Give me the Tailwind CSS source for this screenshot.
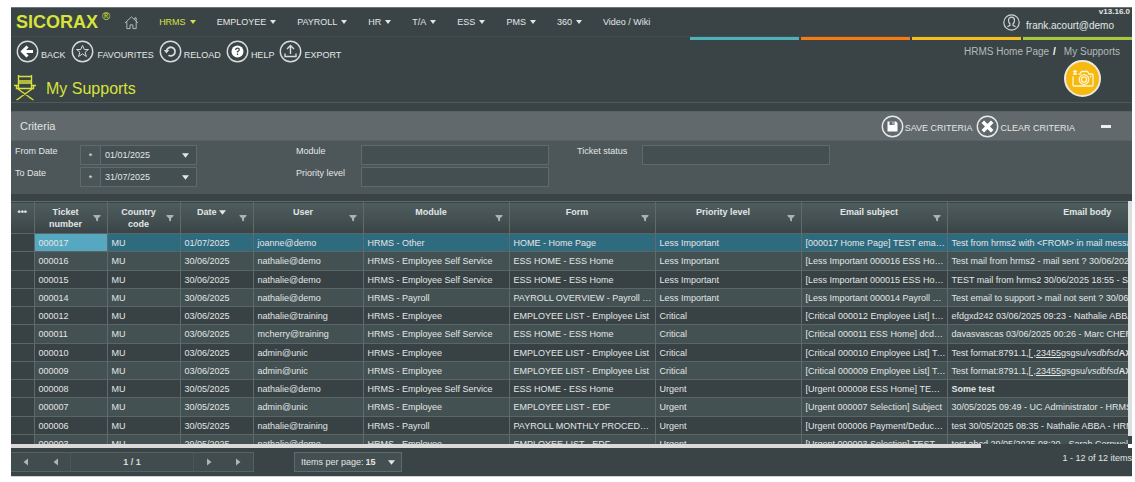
<!DOCTYPE html>
<html lang="en">
<head>
  <meta charset="utf-8">
  <title>SICORAX - My Supports</title>
  <script src="https://cdn.jsdelivr.net/npm/@tailwindcss/browser@4"></script>
</head>
<body class="bg-white pt-[7px] pl-[11px] pr-[3px] font-['Liberation_Sans',Arial,sans-serif] text-[9px] leading-3 text-[#e2e6e6]">
  <svg class="hidden">
    <symbol id="caret" viewBox="0 0 6 4"><path d="M0 0h6L3 4z" fill="currentColor"/></symbol>
    <symbol id="funnel" viewBox="0 0 8 8"><path d="M0.5 1h7v1L5 4.5V7.5L3 6.5V4.5L0.5 2z" fill="currentColor"/></symbol>
    <symbol id="left" viewBox="0 0 6 8"><path d="M5 0.5v7L0.5 4z" fill="currentColor"/></symbol>
    <symbol id="right" viewBox="0 0 6 8"><path d="M1 0.5v7L5.5 4z" fill="currentColor"/></symbol>
  </svg>

  <div class="overflow-hidden border-b border-[#cfd2d2] bg-[#3a4446]">
    <!-- top nav -->
    <header class="flex h-[30px] items-center border-t border-b border-t-[#6d7577] border-b-[#434d4f] pl-[5px]">
      <a href="#" class="flex text-[18px] leading-6 font-bold text-[#d7e23a]">SICORAX<sup class="top-0 ml-1 text-[11px] leading-3 font-normal">®</sup></a>
      <a href="#" aria-label="Home" class="ml-3.5">
        <svg class="size-[15px]" viewBox="0 0 16 16" fill="none" stroke="#b9c0c0" stroke-width="1"><path d="M1 8.5L8 2l7 6.5M3 7v7.5h3.500v-4h3v4H13V7M11.500 5V3h1.500v3.300"/></svg>
      </a>
      <nav class="ml-5 flex grow items-center gap-[21px]">
        <a href="#" class="flex items-center gap-1 text-[#d7e23a]">HRMS <svg class="h-1 w-1.5"><use href="#caret"/></svg></a>
        <a href="#" class="flex items-center gap-1">EMPLOYEE <svg class="h-1 w-1.5"><use href="#caret"/></svg></a>
        <a href="#" class="flex items-center gap-1">PAYROLL <svg class="h-1 w-1.5"><use href="#caret"/></svg></a>
        <a href="#" class="flex items-center gap-1">HR <svg class="h-1 w-1.5"><use href="#caret"/></svg></a>
        <a href="#" class="flex items-center gap-1">T/A <svg class="h-1 w-1.5"><use href="#caret"/></svg></a>
        <a href="#" class="flex items-center gap-1">ESS <svg class="h-1 w-1.5"><use href="#caret"/></svg></a>
        <a href="#" class="flex items-center gap-1">PMS <svg class="h-1 w-1.5"><use href="#caret"/></svg></a>
        <a href="#" class="flex items-center gap-1">360 <svg class="h-1 w-1.5"><use href="#caret"/></svg></a>
        <a href="#">Video / Wiki</a>
      </nav>
      <svg class="mr-1.5 size-[17px]" viewBox="0 0 17 17" fill="none" stroke="#cdd3d3" stroke-width="1.200"><circle cx="8.500" cy="8.500" r="7.700"/><path d="M8.500 3.200c-2 0-3 1.400-3 3.100s.8 3 1.500 3.700v1.300l-2.600 1.400M8.500 3.200c2 0 3 1.400 3 3.100s-.8 3-1.500 3.700v1.300l2.600 1.400"/></svg>
      <div class="flex flex-col self-start">
        <span class="mr-0.5 self-end text-[8px] leading-2 font-bold">v13.16.0</span>
        <a href="#" class="mr-[18px] pt-1 text-[10px]">frank.acourt@demo</a>
      </div>
    </header>
    <div class="flex h-[3px] justify-end gap-0.5">
      <div class="w-[109px] bg-[#4cb3bb]"></div>
      <div class="w-[109px] bg-[#fb7a0d]"></div>
      <div class="w-[109px] bg-[#f4bd1c]"></div>
      <div class="w-[109px] bg-[#a6c83c]"></div>
    </div>

    <!-- toolbar and page title -->
    <div class="flex h-[63px] justify-between border-b border-[#4e585a]">
      <div>
        <div class="flex gap-[5px] pl-[5px]">
          <button class="flex items-center gap-0.5">
            <svg class="size-[23px]" viewBox="0 0 23 23" fill="none" stroke="#d6dbdb"><circle cx="11.500" cy="11.500" r="10.200" stroke-width="1.400"/><path d="M17 11.500H7M11.500 6.500l-5 5 5 5" stroke="#fff" stroke-width="3"/></svg>
            <span class="pt-1.5">BACK</span>
          </button>
          <button class="flex items-center gap-1">
            <svg class="size-[23px]" viewBox="0 0 23 23" fill="none" stroke="#d6dbdb"><circle cx="11.500" cy="11.500" r="10.200" stroke-width="1.400"/><path d="M11.500 5.500l1.800 4h4.200l-3.400 2.700 1.300 4.300-3.900-2.600-3.900 2.600 1.300-4.300-3.400-2.700h4.200z"/></svg>
            <span class="pt-1.5">FAVOURITES</span>
          </button>
          <button class="flex items-center gap-0.5">
            <svg class="size-[23px]" viewBox="0 0 23 23" fill="none" stroke="#d6dbdb"><circle cx="11.500" cy="11.500" r="10.200" stroke-width="1.400"/><path d="M7.500 11a4.300 4.300 0 1 1 2 4.200" stroke-width="1.800"/><path d="M4.800 10h5.400l-2.700 3.600z" fill="#d6dbdb" stroke="none"/></svg>
            <span class="pt-1.5">RELOAD</span>
          </button>
          <button class="flex items-center gap-0.5">
            <svg class="size-[23px]" viewBox="0 0 23 23" fill="none" stroke="#d6dbdb"><circle cx="11.500" cy="11.500" r="10.200" stroke-width="1.400"/><circle cx="11.500" cy="11.500" r="6" fill="#fff" stroke="none"/><path d="M9.700 10q0-1.800 1.800-1.800t1.800 1.600q0 1-1.800 1.900v.8M11.500 13.500v1.500" stroke="#3a4446" stroke-width="1.300"/></svg>
            <span class="pt-1.5">HELP</span>
          </button>
          <button class="flex items-center gap-0.5">
            <svg class="size-[23px]" viewBox="0 0 23 23" fill="none" stroke="#d6dbdb"><circle cx="11.500" cy="11.500" r="10.200" stroke-width="1.400"/><path d="M11.500 14V6M8 9l3.500-3.500L15 9M6 13.500v3h11v-3" stroke-width="1.400"/></svg>
            <span class="pt-1.5">EXPORT</span>
          </button>
        </div>
        <div class="flex items-center gap-2.5 pt-3 pl-[3px]">
          <svg class="h-[26px] w-[22px]" viewBox="0 0 22 26" fill="none" stroke="#d7e23a" stroke-width="1.400"><path d="M4.500 0v13M17.500 0v13M4.500 1.500h13M4.500 6h13M4.500 8h13M0 10.500h5M17 10.500h5M2.500 11v2.500h17V11M4 14l14 10M18 14L4 24M2.500 25l4-2.500M19.500 25l-4-2.500"/></svg>
          <h1 class="pt-0.5 text-[16px] leading-5 text-[#d7e23a]">My Supports</h1>
        </div>
      </div>
      <div class="flex flex-col">
        <div class="flex gap-1 pt-[6px] pr-3 text-[10px] text-[#b3baba]">
          <a href="#">HRMS Home Page</a><b class="text-white">/</b><a href="#" class="ml-1">My Supports</a>
        </div>
        <button aria-label="Screenshot" class="mt-0.5 mr-[31px] flex size-[37px] items-center justify-center self-end rounded-full border-2 border-[#eceae0] bg-[#f8b90e]">
          <svg class="h-[17px] w-[22px]" viewBox="0 0 22 17" fill="none" stroke="#fff6d8" stroke-width="1.300"><path d="M1 6.500V15q0 1 1 1h18q1 0 1-1V5q0-1-1-1h-3l-1.500-2.500h-6L8 4H6.500"/><circle cx="12" cy="9.500" r="4.800"/><circle cx="12" cy="9.500" r="2.600"/><path d="M1 1.500h4M1 4h4M3 0v5M17.800 6.500h1.500"/></svg>
        </button>
      </div>
    </div>

    <!-- criteria -->
    <section class="mt-2 bg-[#4d5658]">
      <div class="flex h-[30px] items-center border-t border-b border-t-[#596264] border-b-[#586163] bg-[#61696c] pr-[21px] pl-[9px]">
        <h2 class="grow text-[11px]">Criteria</h2>
        <button class="flex items-center gap-px">
          <svg class="size-[23px]" viewBox="0 0 23 23" fill="none" stroke="#e6eaea"><circle cx="11.500" cy="11.500" r="10.200" stroke-width="1.400"/><path d="M6.500 6.500h8.500l1.500 1.500v8.500h-10z" fill="#fff" stroke="none"/><path d="M8.500 6.500h5v3.500h-5z" fill="#61696c" stroke="none"/><path d="M12 7v2.500"/></svg>
          <span class="pt-1">SAVE CRITERIA</span>
        </button>
        <button class="ml-1 flex items-center gap-px">
          <svg class="size-[23px]" viewBox="0 0 23 23" fill="none" stroke="#e6eaea"><circle cx="11.500" cy="11.500" r="10.200" stroke-width="1.400"/><path d="M6.800 6.800l9.400 9.400M16.200 6.800l-9.400 9.400" stroke="#fff" stroke-width="3.600"/></svg>
          <span class="pt-1">CLEAR CRITERIA</span>
        </button>
        <button aria-label="Collapse" class="ml-[26px] flex h-4 items-center"><span class="h-[3px] w-2.5 bg-[#eef0f0]"></span></button>
      </div>
      <form class="grid h-[53px] grid-cols-[281px_281px_1fr] items-start pt-1 pl-1">
        <div class="grid grid-cols-[65px_117px] gap-y-0.5">
          <label for="from">From Date</label>
          <div class="flex h-5 items-center border border-[#5f6a6c] bg-[#434f51]">
            <span class="h-full w-5 border-r border-[#5f6a6c] bg-[#4a5557] pt-1 text-center">*</span>
            <input id="from" type="text" value="01/01/2025" class="w-[81px] px-1 outline-none">
            <button type="button" aria-label="Pick from date"><svg class="h-[5px] w-[7px]"><use href="#caret"/></svg></button>
          </div>
          <label for="to">To Date</label>
          <div class="flex h-5 items-center border border-[#5f6a6c] bg-[#434f51]">
            <span class="h-full w-5 border-r border-[#5f6a6c] bg-[#4a5557] pt-1 text-center">*</span>
            <input id="to" type="text" value="31/07/2025" class="w-[81px] px-1 outline-none">
            <button type="button" aria-label="Pick to date"><svg class="h-[5px] w-[7px]"><use href="#caret"/></svg></button>
          </div>
        </div>
        <div class="grid grid-cols-[65px_188px] gap-y-0.5">
          <label for="module">Module</label>
          <input id="module" type="text" class="h-5 border border-[#5f6a6c] bg-[#434f51] px-1">
          <label for="priority">Priority level</label>
          <input id="priority" type="text" class="h-5 border border-[#5f6a6c] bg-[#434f51] px-1">
        </div>
        <div class="grid grid-cols-[65px_188px]">
          <label for="status">Ticket status</label>
          <input id="status" type="text" class="h-5 border border-[#5f6a6c] bg-[#434f51] px-1">
        </div>
      </form>
    </section>

    <!-- grid -->
    <div class="mt-[7px] flex h-[243px]">
      <div class="grow basis-0 overflow-hidden">
        <table class="w-[1226px] table-fixed border-collapse">
          <colgroup>
            <col class="w-[23px]"><col class="w-[73px]"><col class="w-[73px]"><col class="w-[73px]"><col class="w-[110px]">
            <col class="w-[146px]"><col class="w-[146px]"><col class="w-[146px]"><col class="w-[146px]"><col>
          </colgroup>
          <thead>
            <tr id="head" class="h-8 border-t border-[#5f6a6c] bg-linear-to-b from-[#4f5d5f] to-[#3a4446]"></tr>
          </thead>
          <tbody id="rows"></tbody>
        </table>
      </div>
      <div class="w-1 pb-2"><div class="h-full bg-[#dcdedd]"></div></div>
    </div>
    <div class="flex h-1 justify-between">
      <div class="w-[970px] bg-[#dcdad8]"></div>
      <div class="w-1 bg-white"></div>
    </div>

    <!-- pager -->
    <footer class="flex h-[28px] items-start pt-1">
      <div class="flex h-5 w-[243px] items-center border border-l-0 border-[#566163] bg-[#414c4e] text-[#aeb5b5]">
        <button aria-label="First page" class="flex w-[30px] justify-center"><svg class="h-2 w-1.5"><use href="#left"/></svg></button>
        <button aria-label="Previous page" class="flex h-full w-[30px] items-center justify-center border-r border-[#4b5658]"><svg class="h-2 w-1.5"><use href="#left"/></svg></button>
        <span class="grow text-center font-bold text-[#d5dada]">1 / 1</span>
        <button aria-label="Next page" class="flex h-full w-[30px] items-center justify-center border-l border-[#4b5658]"><svg class="h-2 w-1.5"><use href="#right"/></svg></button>
        <button aria-label="Last page" class="flex w-[30px] justify-center"><svg class="h-2 w-1.5"><use href="#right"/></svg></button>
      </div>
      <div class="ml-10 flex h-5 w-[108px] items-center border border-[#5f6a6c] bg-[#434f51] pl-1.5">
        <label for="size">Items per page:</label>
        <select id="size" class="ml-0.5 w-[22px] appearance-none font-bold"><option>15</option><option>30</option></select>
        <svg class="h-[5px] w-[7px]"><use href="#caret"/></svg>
      </div>
      <span class="grow text-right">1 - 12 of 12 items</span>
    </footer>
  </div>

  <script>
    const cols = ['Ticket number', 'Country code', 'Date', 'User', 'Module', 'Form', 'Priority level', 'Email subject', 'Email body'];
    const format = 'Test format:8791.1,<u>[ ,23455</u>gsgsu/<i>vsdbfsd</i><b>AXXX</b>';
    const rows = [
      ['000017', 'MU', '01/07/2025', 'joanne@demo', 'HRMS - Other', 'HOME - Home Page', 'Less Important', '[000017 Home Page] TEST email 2', 'Test from hrms2 with &lt;FROM&gt; in mail message'],
      ['000016', 'MU', '30/06/2025', 'nathalie@demo', 'HRMS - Employee Self Service', 'ESS HOME - ESS Home', 'Less Important', '[Less Important 000016 ESS Home]', 'Test mail from hrms2 - mail sent ? 30/06/2025'],
      ['000015', 'MU', '30/06/2025', 'nathalie@demo', 'HRMS - Employee Self Service', 'ESS HOME - ESS Home', 'Less Important', '[Less Important 000015 ESS Home]', 'TEST mail from hrms2 30/06/2025 18:55 - Sarah'],
      ['000014', 'MU', '30/06/2025', 'nathalie@demo', 'HRMS - Payroll', 'PAYROLL OVERVIEW - Payroll Overview', 'Less Important', '[Less Important 000014 Payroll Overview]', 'Test email to support &gt; mail not sent ? 30/06/2025'],
      ['000012', 'MU', '03/06/2025', 'nathalie@training', 'HRMS - Employee', 'EMPLOYEE LIST - Employee List', 'Critical', '[Critical 000012 Employee List] test', 'efdgxd242 03/06/2025 09:23 - Nathalie ABBA'],
      ['000011', 'MU', '03/06/2025', 'mcherry@training', 'HRMS - Employee Self Service', 'ESS HOME - ESS Home', 'Critical', '[Critical 000011 ESS Home] dcdcdc', 'davasvascas 03/06/2025 00:26 - Marc CHERRY'],
      ['000010', 'MU', '03/06/2025', 'admin@unic', 'HRMS - Employee', 'EMPLOYEE LIST - Employee List', 'Critical', '[Critical 000010 Employee List] Test', format],
      ['000009', 'MU', '03/06/2025', 'admin@unic', 'HRMS - Employee', 'EMPLOYEE LIST - Employee List', 'Critical', '[Critical 000009 Employee List] Test', format],
      ['000008', 'MU', '30/05/2025', 'nathalie@demo', 'HRMS - Employee Self Service', 'ESS HOME - ESS Home', 'Urgent', '[Urgent 000008 ESS Home] TEST mail', '<b>Some test</b>'],
      ['000007', 'MU', '30/05/2025', 'admin@unic', 'HRMS - Employee', 'EMPLOYEE LIST - EDF', 'Urgent', '[Urgent 000007 Selection] Subject', '30/05/2025 09:49 - UC Administrator - HRMS'],
      ['000006', 'MU', '30/05/2025', 'nathalie@training', 'HRMS - Payroll', 'PAYROLL MONTHLY PROCEDURES', 'Urgent', '[Urgent 000006 Payment/Deductions]', 'test 30/05/2025 08:35 - Nathalie ABBA - HRMS'],
      ['000003', 'MU', '29/05/2025', 'nathalie@demo', 'HRMS - Employee', 'EMPLOYEE LIST - EDF', 'Urgent', '[Urgent 000003 Selection] TEST', 'test abcd 29/05/2025 08:20 - Sarah Cornwell'],
    ];

    document.getElementById('head').innerHTML =
      '<th class="pt-1 align-top leading-3">•••</th>' +
      cols.map(c => `<th class="border-l border-[#5f6a6c] p-0 align-top">
        <div class="flex h-[30px] items-start pt-1 pr-1.5 pl-1">
          <span class="grow text-center">${c}${c == 'Date' ? ' <svg class="inline h-[5px] w-[7px] align-baseline"><use href="#caret"/></svg>' : ''}</span>
          <svg class="mt-2 size-2 shrink-0 text-[#a9b1b1]"><use href="#funnel"/></svg>
        </div></th>`).join('');

    document.getElementById('rows').innerHTML = rows.map((r, n) =>
      `<tr class="h-[18px] border-t border-[#5a6567] nth-[4n+2]:h-[19px] ${n == 0 ? 'bg-[#2f6b7e]' : n % 2 ? 'bg-[#445152]' : 'bg-[#384244]'}">
        <td class="bg-[#384244]"></td>` +
      r.map((v, i) => `<td class="truncate border-l border-[#5f6a6c] py-0 pr-px pl-1 ${n == 0 && i == 0 ? 'bg-[#56a8c0]' : ''}">${v}</td>`).join('') +
      '</tr>').join('');
  </script>
</body>
</html>
